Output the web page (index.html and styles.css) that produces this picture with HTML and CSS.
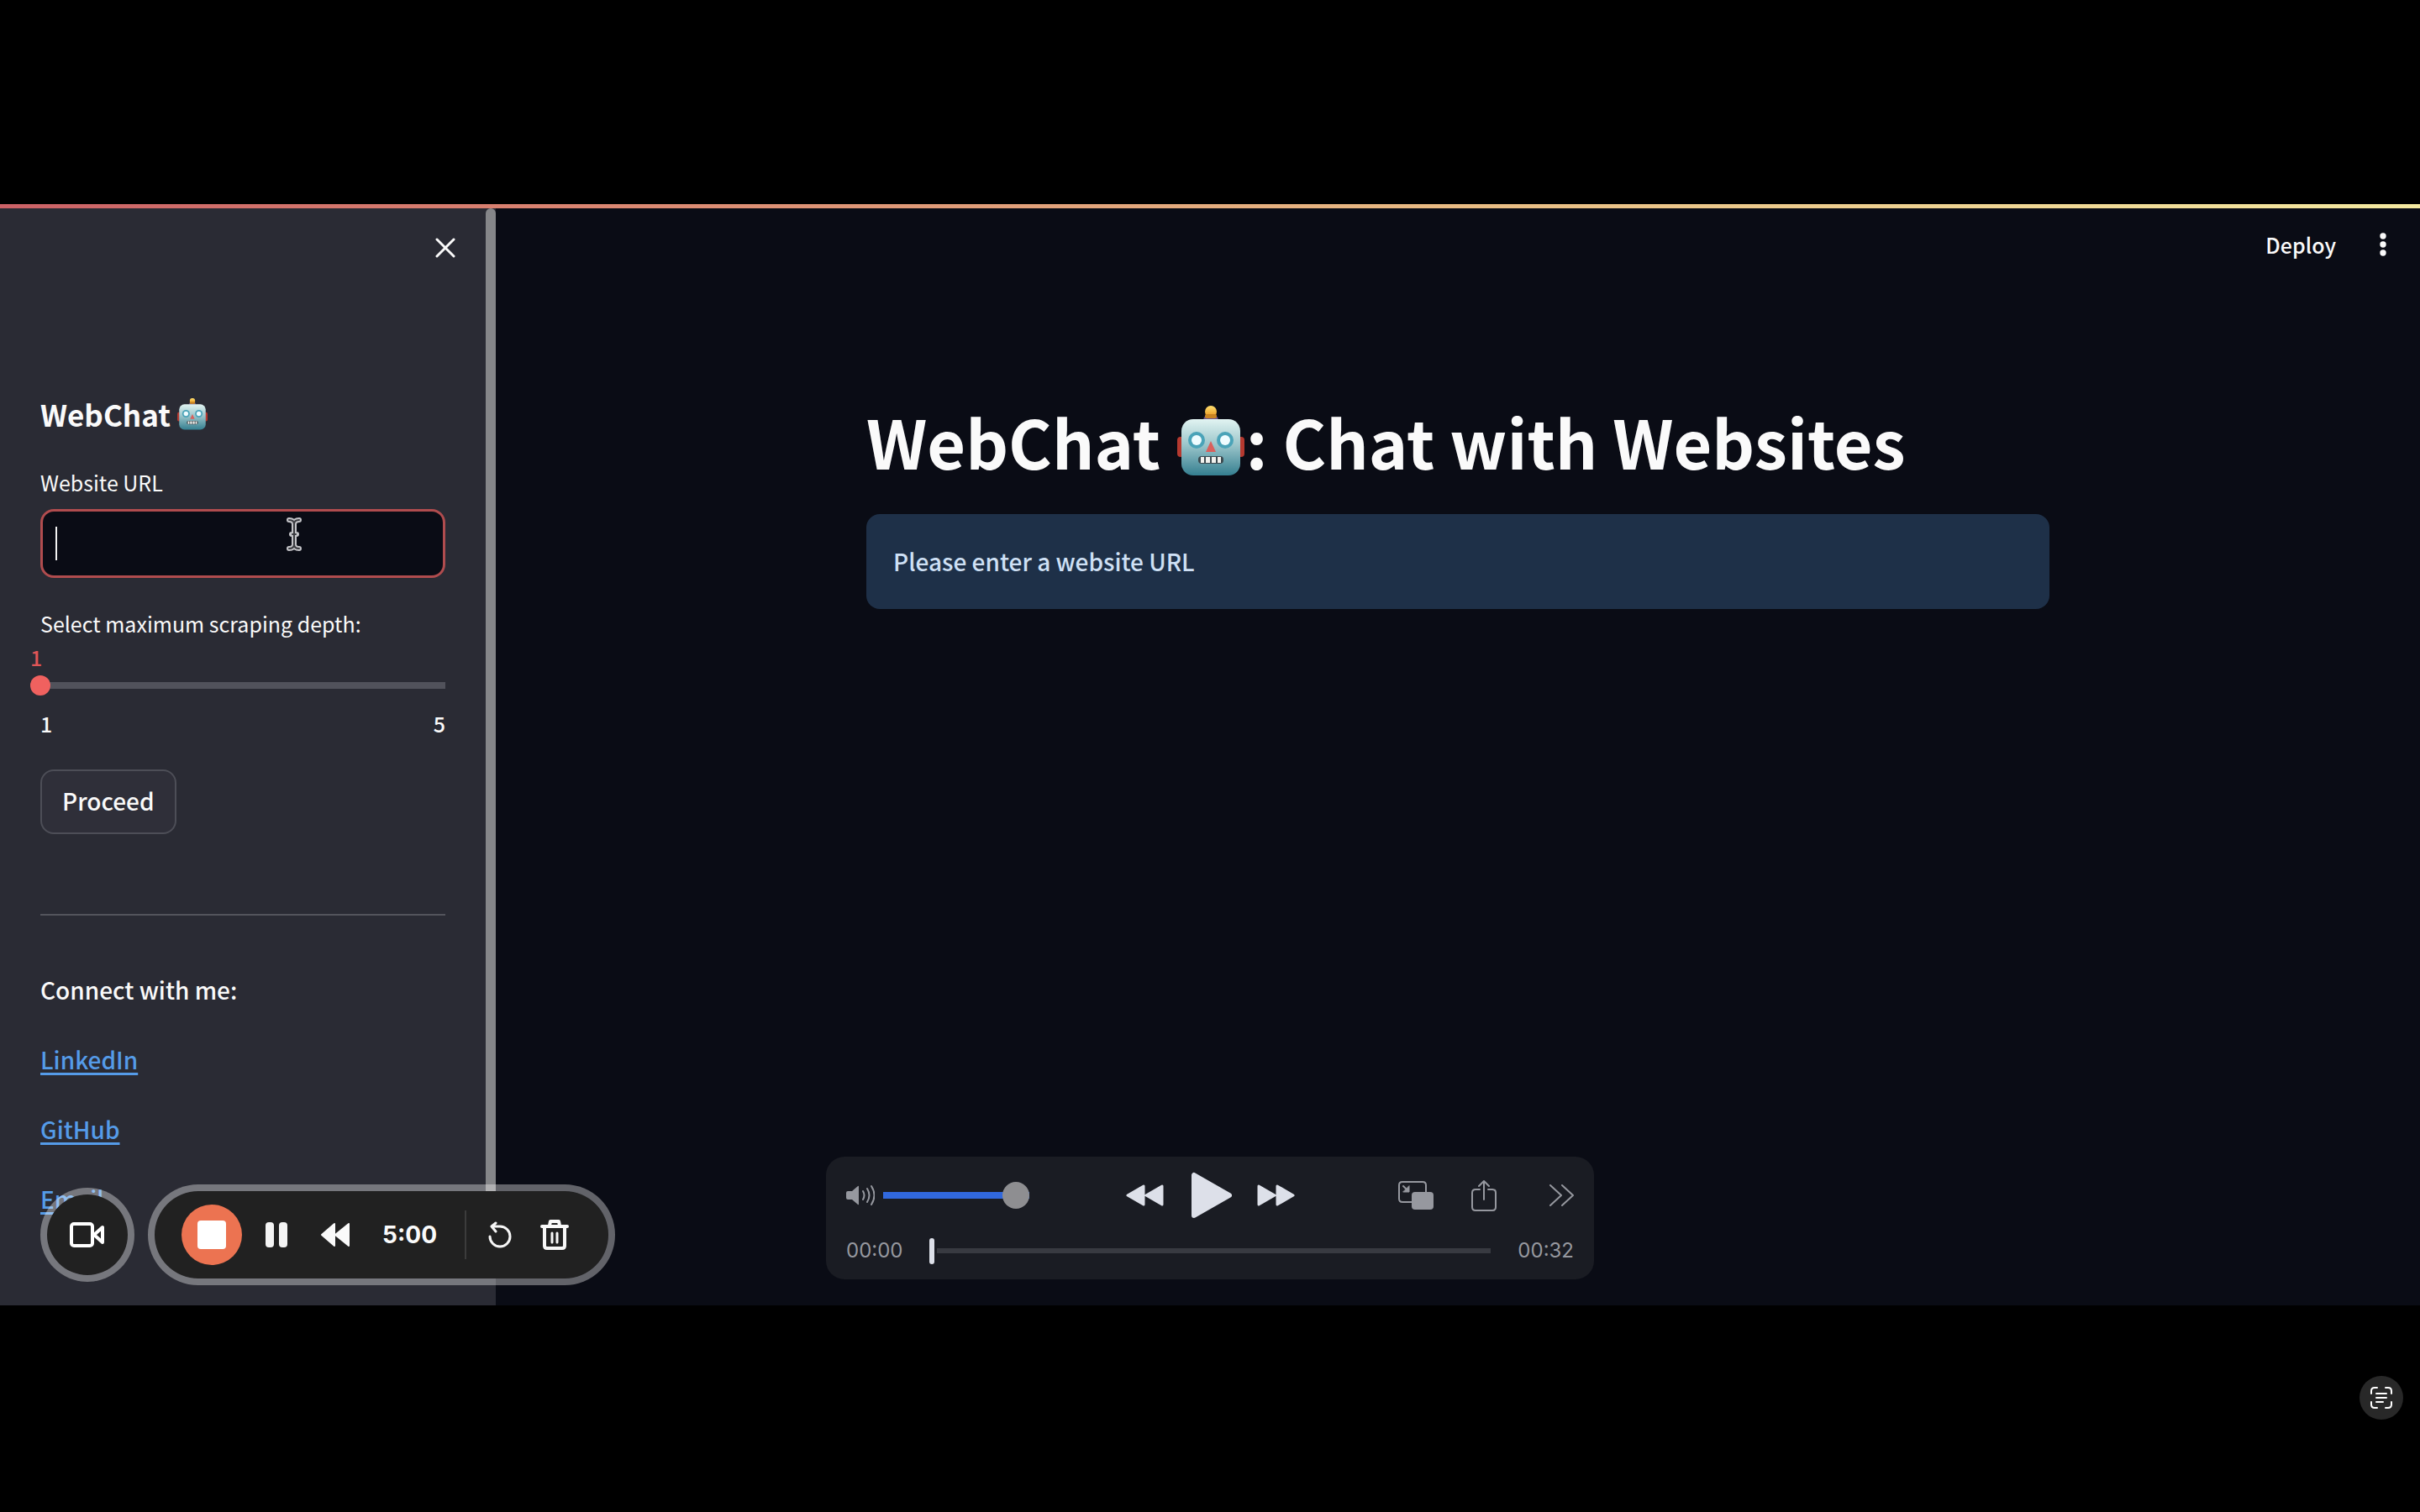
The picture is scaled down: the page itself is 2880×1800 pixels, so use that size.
FILE: index.html
```html
<!DOCTYPE html>
<html lang="en">
<head>
<meta charset="utf-8">
<title>WebChat</title>
<link rel="stylesheet" href="styles.css">
</head>
<body>
<svg width="0" height="0" class="defs" aria-hidden="true">
  <defs>
    <linearGradient id="face" x1="0" y1="0" x2="0" y2="1">
      <stop offset="0" stop-color="#e2f4f2"/><stop offset=".45" stop-color="#9cc6cb"/><stop offset="1" stop-color="#357f90"/>
    </linearGradient>
    <linearGradient id="bulb" x1="0" y1="0" x2="0" y2="1">
      <stop offset="0" stop-color="#ffe070"/><stop offset="1" stop-color="#e89018"/>
    </linearGradient>
    <symbol id="robot" viewBox="0 0 80 84">
      <rect x="0" y="37" width="8" height="24" rx="4" fill="#b5392f"/>
      <rect x="72" y="37" width="8" height="24" rx="4" fill="#b5392f"/>
      <path d="M31 17a9 7 0 0 1 18 0z" fill="#6b5590"/>
      <circle cx="40" cy="7" r="7" fill="url(#bulb)"/>
      <rect x="33" y="10" width="14" height="5" rx="2" fill="#c98322"/>
      <rect x="5" y="16" width="70" height="67" rx="14" fill="url(#face)"/>
      <circle cx="23" cy="41" r="10" fill="#4aa3b8"/><circle cx="57" cy="41" r="10" fill="#4aa3b8"/>
      <circle cx="23" cy="41" r="6" fill="#effcff"/><circle cx="57" cy="41" r="6" fill="#effcff"/>
      <path d="M40 42l6 13H34z" fill="#d9605c"/>
      <rect x="25" y="60" width="30" height="9" rx="4" fill="#3c4a50"/>
      <path d="M28 61h4v7h-4zM34 61h5v7h-5zM41 61h5v7h-5zM48 61h4v7h-4z" fill="#f2f2ee"/>
    </symbol>
  </defs>
</svg>

<div class="stage">
  <aside class="sidebar">
    <div class="sidebar-content">
      <div class="sidebar-top">
        <button class="icon-button" aria-label="Close sidebar">
          <svg width="24" height="24" viewBox="0 0 24 24" fill="none" stroke="#fafafa" stroke-width="3" stroke-linecap="round"><path d="M2 2l20 20M22 2L2 22"/></svg>
        </button>
      </div>
      <h2 class="brand">WebChat <svg class="robot-small" role="img" aria-label="robot"><use href="#robot"/></svg></h2>

      <form class="form">
        <label class="label" for="url">Website URL</label>
        <div class="url-field">
          <input class="url-input" id="url" type="text">
          <span class="caret"></span>
          <svg class="ibeam" width="18" height="40" viewBox="0 0 18 40" fill="none" stroke-linecap="round" stroke-linejoin="round">
            <path d="M3 3c4 0 6 2 6 5c0-3 2-5 6-5M3 37c4 0 6-2 6-5c0 3 2 5 6 5M9 8v24M6 20h6" stroke="#c4c4c8" stroke-width="6"/>
            <path d="M3 3c4 0 6 2 6 5c0-3 2-5 6-5M3 37c4 0 6-2 6-5c0 3 2 5 6 5M9 8v24M7 20h4" stroke="#3a3b40" stroke-width="2"/>
          </svg>
        </div>

        <label class="label depth-label" for="depth">Select maximum scraping depth:</label>
        <output class="depth-value" for="depth">1</output>
        <input class="depth" id="depth" type="range" min="1" max="5" value="1">
        <div class="depth-range"><span>1</span><span>5</span></div>

        <button class="proceed" type="button">Proceed</button>
      </form>

      <hr class="rule">
      <nav class="links">
        <span>Connect with me:</span>
        <a href="#linkedin">LinkedIn</a>
        <a href="#github">GitHub</a>
        <a href="#email">Email</a>
      </nav>
    </div>
    <div class="scrollbar"></div>
  </aside>

  <main class="main">
    <header class="toolbar">
      <button class="deploy">Deploy</button>
      <button class="icon-button" aria-label="Menu">
        <svg width="8" height="28" viewBox="0 0 8 28" fill="#fafafa"><circle cx="4" cy="4" r="3.7"/><circle cx="4" cy="14" r="3.7"/><circle cx="4" cy="24" r="3.7"/></svg>
      </button>
    </header>
    <section class="content">
      <h1 class="title">WebChat <svg class="robot-large" role="img" aria-label="robot"><use href="#robot"/></svg>: Chat with Websites</h1>
      <p class="alert">Please enter a website URL</p>
    </section>
  </main>

  <div class="recorder">
    <button class="camera" aria-label="Camera">
      <svg width="42" height="30" viewBox="0 0 42 30" fill="none" stroke="#fff" stroke-width="4" stroke-linejoin="round"><rect x="2" y="2" width="25" height="26" rx="3"/><path d="M29 15L39 6v18z"/></svg>
    </button>
    <div class="recorder-bar">
      <button class="stop" aria-label="Stop"><span class="stop-square"></span></button>
      <button class="icon-button" aria-label="Pause">
        <svg width="26" height="30" viewBox="0 0 26 30" fill="#f4f4f4"><rect width="10" height="30" rx="4"/><rect x="16" width="10" height="30" rx="4"/></svg>
      </button>
      <button class="icon-button back" aria-label="Rewind">
        <svg width="36" height="30" viewBox="0 0 36 30" fill="#fafafa" stroke="#fafafa" stroke-width="2" stroke-linejoin="round"><path d="M17 2v26L2 15zM34 2v26L18 15z"/></svg>
      </button>
      <time class="clock">5:00</time>
      <span class="divider"></span>
      <button class="icon-button restart" aria-label="Restart">
        <svg width="28" height="32" viewBox="0 0 28 32" fill="none" stroke="#f6f6f6" stroke-width="3" stroke-linecap="round" stroke-linejoin="round"><path d="M2 18a12 12 0 1 0 12-12H5M9 2L4 6l5 6"/></svg>
      </button>
      <button class="icon-button trash" aria-label="Delete">
        <svg width="34" height="36" viewBox="0 0 34 36" fill="none" stroke="#f8f8f8" stroke-width="4" stroke-linecap="round" stroke-linejoin="round"><path d="M2 8h30M11 7l1-5h10l1 5M5 9v22q0 3 3 3h18q3 0 3-3V9"/><path d="M14 16v11M20 16v11" stroke-width="3"/></svg>
      </button>
    </div>
  </div>

  <div class="player">
    <div class="player-row">
      <div class="volume-group">
        <svg width="34" height="26" viewBox="0 0 34 26" fill="none" stroke="#96989f" stroke-width="2" stroke-linecap="round"><path d="M2 8h5l7-6q1-1 1 1v20q0 2-1 1l-7-6H2q-2 0-2-2v-6q0-2 2-2z" fill="#96989f" stroke="none"/><path d="M20 8q3 5 0 10M25 5q5 8 0 16M30 2q7 11 0 22"/></svg>
        <input class="volume" type="range" min="0" max="100" value="100" aria-label="Volume">
      </div>
      <div class="transport">
        <button class="icon-button" aria-label="Back"><svg width="46" height="26" viewBox="0 0 46 26" fill="#dde0e9" stroke="#dde0e9" stroke-width="3" stroke-linejoin="round"><path d="M21 2v22L2 13zM43 2v22L24 13z"/></svg></button>
        <button class="icon-button" aria-label="Play"><svg width="50" height="56" viewBox="0 0 50 56" fill="#dde0e9" stroke="#dde0e9" stroke-width="6" stroke-linejoin="round"><path d="M5 4v48l42-24z"/></svg></button>
        <button class="icon-button" aria-label="Forward"><svg width="46" height="26" viewBox="0 0 46 26" fill="#dde0e9" stroke="#dde0e9" stroke-width="3" stroke-linejoin="round"><path d="M2 2v22l19-11zM24 2v22l19-11z"/></svg></button>
      </div>
      <div class="actions">
        <button class="icon-button" aria-label="Picture in picture"><svg width="42" height="34" viewBox="0 0 42 34" fill="none" stroke="#96989f" stroke-width="2" stroke-linecap="round"><path d="M16 25H5q-4 0-4-4V5q0-4 4-4h24q4 0 4 4v9"/><path d="M6 6l5 5"/><path d="M13 6v7H6z" fill="#96989f" stroke-width="1" stroke-linejoin="round"/><rect x="16" y="13" width="26" height="21" rx="4" fill="#96989f" stroke="none"/></svg></button>
        <button class="icon-button" aria-label="Share"><svg width="30" height="38" viewBox="0 0 30 38" fill="none" stroke="#96989f" stroke-width="2" stroke-linecap="round" stroke-linejoin="round"><path d="M10 12H5q-4 0-4 4v17q0 4 4 4h20q4 0 4-4V16q0-4-4-4h-5M15 24V2M9 8l6-6 6 6"/></svg></button>
        <button class="icon-button more" aria-label="More"><svg width="30" height="28" viewBox="0 0 30 28" fill="none" stroke="#96989f" stroke-width="2" stroke-linecap="round" stroke-linejoin="round"><path d="M2 2l13 12L2 26M16 2l13 12-13 12"/></svg></button>
      </div>
    </div>
    <div class="player-row scrub-row">
      <time class="time">00:00</time>
      <input class="scrub" type="range" min="0" max="32" value="0" aria-label="Position">
      <time class="time">00:32</time>
    </div>
  </div>
</div>

<button class="live-text" aria-label="Live text">
  <svg width="26" height="26" viewBox="0 0 26 26" fill="none" stroke="#fff" stroke-width="2" stroke-linecap="round"><path d="M1 8V5q0-4 4-4h3M18 1h3q4 0 4 4v3M25 18v3q0 4-4 4h-3M8 25H5q-4 0-4-4v-3M7 8h12M7 13h12M7 18h8"/></svg>
</button>
</body>
</html>
```
FILE: styles.css
```css
* { box-sizing: border-box; }

body {
  margin: 0;
  min-height: 100vh;
  padding-bottom: 3px;
  display: flex;
  flex-direction: column;
  justify-content: center;
  background: #000;
  color: #fafafa;
  font: 500 28px/44px "Noto Sans CJK SC", "Open Sans", sans-serif;
}

button, input { font: inherit; color: inherit; margin: 0; }
svg { display: block; }
.defs { position: absolute; }

.icon-button {
  display: flex;
  align-items: center;
  justify-content: center;
  padding: 0;
  border: 0;
  background: none;
}

.stage {
  position: relative;
  display: flex;
  width: 100%;
  aspect-ratio: 2880 / 1311;
  overflow: hidden;
  background: #0a0c15;
}

.stage::before {
  content: "";
  position: absolute;
  inset: 0 0 auto;
  height: 5px;
  background: linear-gradient(90deg, #cb6166, #d98270 22%, #e8bb83 60%, #f4e9a0);
}

/* Sidebar */
.sidebar { flex: 0 0 590px; display: flex; background: #2a2b34; }
.sidebar-content { flex: 1; padding: 28px 48px 0; }
.scrollbar { width: 12px; height: 1200px; margin-top: 5px; border-radius: 6px; background: #858689; }

.sidebar-top { display: flex; justify-content: flex-end; height: 48px; }
.sidebar-top .icon-button { margin-right: -24px; width: 48px; }

.brand {
  display: flex;
  align-items: center;
  gap: 8px;
  margin: 152px 0 41px;
  font-size: 35px;
  line-height: 44px;
  font-weight: 700;
}
.robot-small { width: 36px; height: 38px; }

.label { display: block; font-size: 25px; line-height: 36px; font-weight: 400; }

.url-field { position: relative; margin-top: 14px; }
.url-input {
  display: block;
  width: 100%;
  height: 82px;
  padding: 0 18px;
  border: 3px solid #b04c4e;
  border-radius: 16px;
  background: #0a0c15;
  outline: none;
}
.caret { position: absolute; left: 18px; top: 21px; width: 2px; height: 40px; background: #f2f2f2; }
.ibeam { position: absolute; left: 293px; top: 10px; overflow: visible; }

.depth-label { margin-top: 36px; }
.depth-value {
  display: block;
  margin: 4px 0 0 -12px;
  font-size: 25px;
  line-height: 36px;
  color: #e05557;
}

.depth {
  display: block;
  appearance: none;
  width: calc(100% + 24px);
  height: 32px;
  margin: 0 -12px;
  background: linear-gradient(#51525b, #51525b) center / calc(100% - 24px) 8px no-repeat;
}
.depth::-webkit-slider-thumb { appearance: none; width: 24px; height: 24px; border-radius: 50%; background: #f0615f; }

.depth-range {
  display: flex;
  justify-content: space-between;
  margin-top: 11px;
  font-size: 25px;
  line-height: 36px;
}

.proceed {
  display: block;
  height: 77px;
  margin-top: 37px;
  padding: 0 24px 4px;
  border: 2px solid #4d4e57;
  border-radius: 16px;
  background: #2f2f39;
}

.rule { height: 2px; margin: 95px 0 66px; border: 0; background: #53545c; }

.links { display: flex; flex-direction: column; align-items: flex-start; gap: 39px; }
.links a { color: #559be8; text-decoration-thickness: 3px; text-underline-offset: 4px; }

/* Main column */
.main { flex: 1; }
.toolbar {
  display: flex;
  justify-content: flex-end;
  align-items: center;
  gap: 52px;
  height: 96px;
  padding: 0 40px 0 0;
}
.deploy { padding: 0; border: 0; background: none; font-size: 25px; line-height: 36px; }

.content { width: 1408px; max-width: 100%; margin: 132px auto 0; }
.title {
  display: flex;
  align-items: center;
  margin: 0 0 33px;
  font-size: 79px;
  line-height: 108px;
  font-weight: 700;
  white-space: pre;
}
.robot-large { width: 80px; height: 84px; margin: 0 2px; }
.alert {
  margin: 0;
  padding: 34px 32px 35px;
  border-radius: 16px;
  background: #1e3048;
  color: #cfe0f5;
}

/* Recorder overlay */
.recorder {
  position: absolute;
  left: 48px;
  bottom: 24px;
  display: flex;
  align-items: center;
  gap: 16px;
}
.camera, .recorder-bar {
  border: 8px solid rgba(255, 255, 255, .36);
  background: #212121 padding-box;
}
.camera {
  display: flex;
  align-items: center;
  justify-content: center;
  width: 112px;
  height: 112px;
  padding: 0;
  border-radius: 50%;
}
.recorder-bar {
  display: flex;
  align-items: center;
  height: 120px;
  padding: 0 47px 0 32px;
  border-radius: 60px;
}
.stop {
  display: flex;
  align-items: center;
  justify-content: center;
  width: 72px;
  height: 72px;
  margin-right: 28px;
  padding: 0;
  border: 0;
  border-radius: 50%;
  background: #ec7351;
}
.stop-square { width: 34px; height: 34px; border-radius: 4px; background: #fff; }
.back { margin: 0 38px 0 39px; }
.clock { width: 68px; font: 700 28px/36px "Inter", sans-serif; white-space: nowrap; }
.divider { width: 2px; height: 58px; margin-left: 30px; background: #3c3c3c; }
.restart { margin: 0 34px 0 26px; }

/* Video player overlay */
.player {
  position: absolute;
  left: 983px;
  bottom: 31px;
  width: 914px;
  height: 146px;
  padding: 14px 24px 0;
  border-radius: 22px;
  background: #1a1c23;
}
.player-row { display: grid; grid-template-columns: 1fr auto 1fr; align-items: center; height: 64px; }
.volume-group, .transport, .actions { display: flex; align-items: center; }
.volume-group { gap: 10px; }
.transport { gap: 30px; padding-left: 2px; }
.actions { justify-content: flex-end; gap: 45px; }
.more { margin-left: 17px; }

.volume {
  appearance: none;
  width: 174px;
  height: 32px;
  border-radius: 4px;
  background: linear-gradient(#3168dd, #3168dd) center / 100% 8px no-repeat;
}
.volume::-webkit-slider-thumb { appearance: none; width: 32px; height: 32px; border-radius: 50%; background: #8e8e91; }

.scrub-row { grid-template-columns: auto 1fr auto; gap: 32px; height: 68px; }
.time { font: 24px/32px "Inter", sans-serif; color: #96989f; }
.scrub {
  appearance: none;
  width: 100%;
  height: 32px;
  background: linear-gradient(#383a41, #383a41) right / calc(100% - 9px) 6px no-repeat;
}
.scrub::-webkit-slider-thumb { appearance: none; width: 6px; height: 31px; border-radius: 3px; background: #dde0e9; }

.live-text {
  position: absolute;
  right: 20px;
  bottom: 110px;
  display: flex;
  align-items: center;
  justify-content: center;
  width: 52px;
  height: 52px;
  padding: 0;
  border: 0;
  border-radius: 50%;
  background: #282828;
}
```
